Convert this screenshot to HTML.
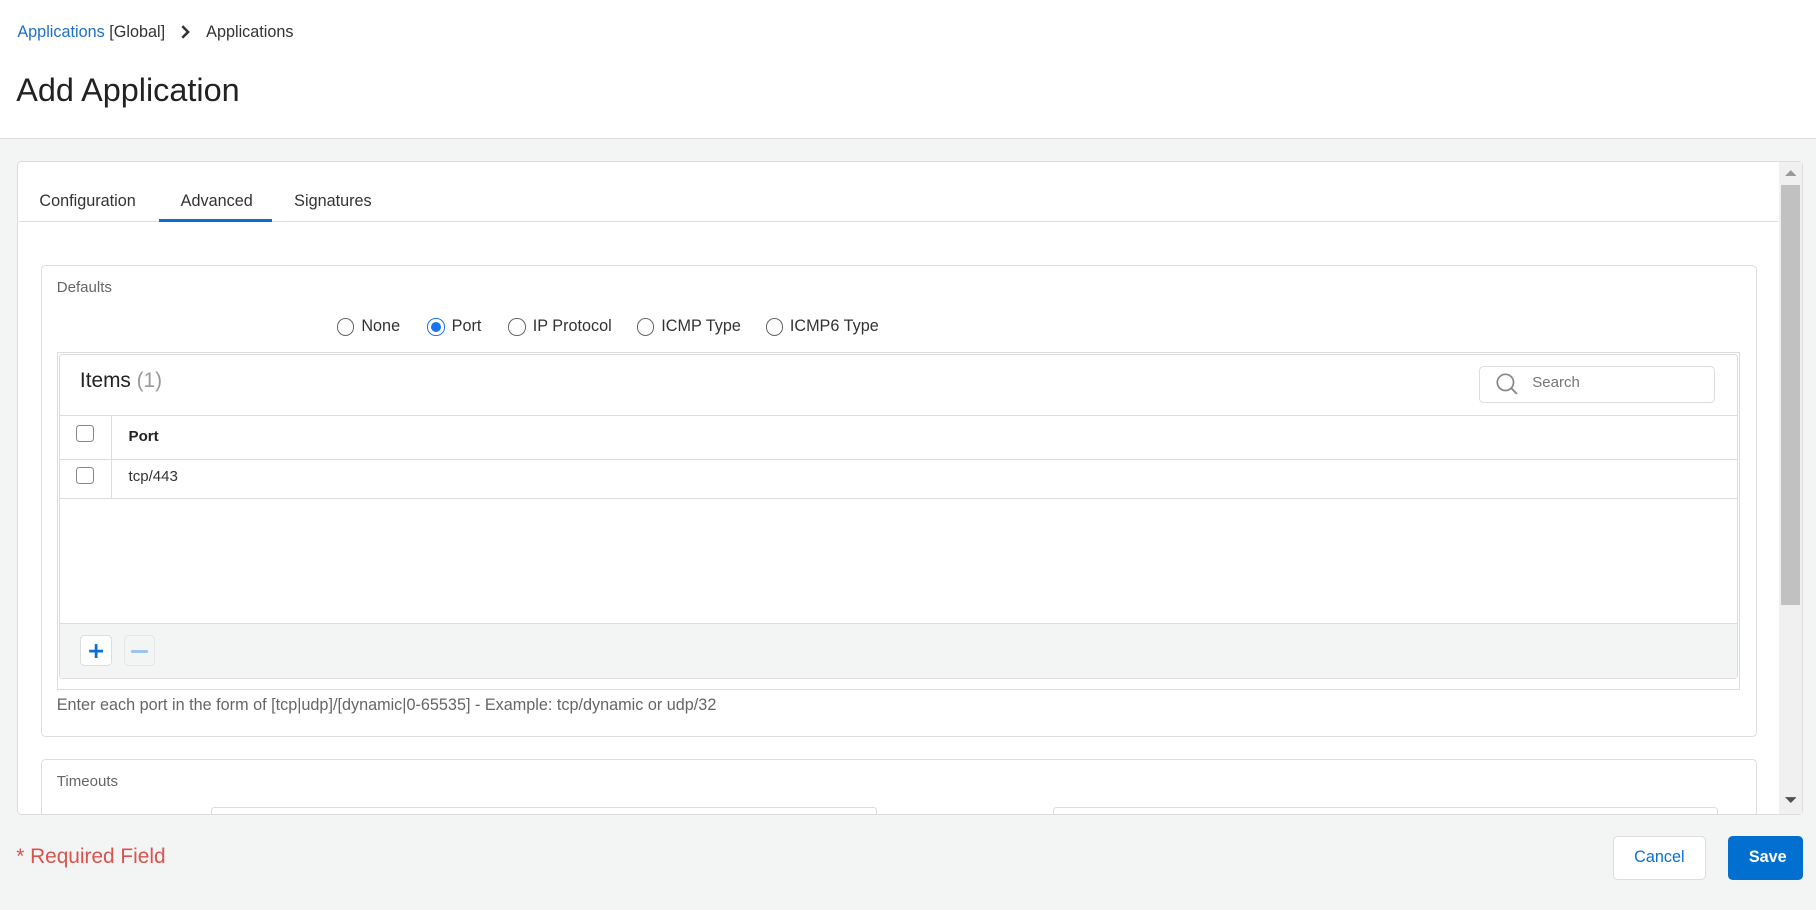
<!DOCTYPE html>
<html><head><meta charset="utf-8"><style>
*{box-sizing:border-box;margin:0;padding:0}
html,body{width:1816px;height:910px;overflow:hidden;background:#f3f4f4}
#w{width:1568px;height:786px;zoom:1.158163;position:relative;font-family:"Liberation Sans",sans-serif;color:#333;background:#f3f4f4}
.a{position:absolute}
.t{position:absolute;white-space:nowrap;line-height:1}
.radio{position:absolute;width:15px;height:15px;border:1px solid #666;border-radius:50%;background:#fff}
.cb{position:absolute;width:15px;height:15px;border:1px solid #888;border-radius:3px;background:#fff}
</style></head><body><div id="w">
<div class="a" style="left:0;top:0;width:1568px;height:120px;background:#fff;border-bottom:1px solid #ddd"></div>
<div class="t" style="left:15px;top:21px;font-size:14px;color:#333"><span style="color:#1f6fc5">Applications</span> [Global]</div>
<svg class="a" style="left:155px;top:22px" width="10" height="12"><path d="M2 1l5 5-5 5" stroke="#333" stroke-width="2.2" fill="none"/></svg>
<div class="t" style="left:178px;top:21px;font-size:14px">Applications</div>
<div class="t" style="left:14px;top:64px;font-size:28px;color:#222">Add Application</div>

<div class="a" style="left:15px;top:139px;width:1542px;height:565px;background:#fff;border:1px solid #ddd;border-radius:4px"></div>
<div class="a" style="left:1536px;top:140px;width:20px;height:563px;background:#f0f0f0"></div>
<div class="a" style="left:1538px;top:160px;width:16px;height:362px;background:#c1c1c1"></div>
<svg class="a" style="left:1541px;top:146px" width="10" height="8"><path d="M0 6h10L5 1z" fill="#999"/></svg>
<svg class="a" style="left:1541px;top:687px" width="10" height="8"><path d="M0 1h10L5 6z" fill="#505050"/></svg>

<div class="a" style="left:16px;top:191px;width:1519px;height:1px;background:#ddd"></div>
<div class="t" style="left:34px;top:167px;font-size:14px">Configuration</div>
<div class="t" style="left:156px;top:167px;font-size:14px">Advanced</div>
<div class="a" style="left:137px;top:189px;width:98px;height:3px;background:#0b6fd0"></div>
<div class="t" style="left:254px;top:167px;font-size:14px">Signatures</div>

<div class="a" style="left:35px;top:229px;width:1482px;height:407px;border:1px solid #ddd;border-radius:4px;background:#fff"></div>
<div class="t" style="left:49px;top:242px;font-size:13px;color:#666">Defaults</div>
<div class="radio" style="left:291px;top:275px"></div><div class="t" style="left:312px;top:275px;font-size:14px">None</div>
<div class="radio" style="left:369px;top:275px;border-color:#1a73e8"></div><div class="a" style="left:372px;top:278px;width:9px;height:9px;border-radius:50%;background:#1a73e8"></div><div class="t" style="left:390px;top:275px;font-size:14px">Port</div>
<div class="radio" style="left:439px;top:275px"></div><div class="t" style="left:460px;top:275px;font-size:14px">IP Protocol</div>
<div class="radio" style="left:550px;top:275px"></div><div class="t" style="left:571px;top:275px;font-size:14px">ICMP Type</div>
<div class="radio" style="left:661px;top:275px"></div><div class="t" style="left:682px;top:275px;font-size:14px">ICMP6 Type</div>

<div class="a" style="left:49px;top:304px;width:1453px;height:292px;border:1px solid #ddd"></div>
<div class="a" style="left:51px;top:306px;width:1450px;height:280px;border:1px solid #ddd;border-radius:3px;background:#fff"></div>
<div class="t" style="left:69px;top:320px;font-size:18px;color:#222">Items <span style="color:#999">(1)</span></div>
<div class="a" style="left:1277px;top:316px;width:204px;height:32px;border:1px solid #ddd;border-radius:4px"></div>
<svg class="a" style="left:1291px;top:321px" width="22" height="22"><circle cx="9" cy="9" r="7" stroke="#888" stroke-width="1.5" fill="none"/><path d="M14 14l5 5" stroke="#888" stroke-width="1.6"/></svg>
<div class="t" style="left:1323px;top:324px;font-size:13px;color:#777">Search</div>
<div class="a" style="left:52px;top:358px;width:1448px;height:1px;background:#ddd"></div>
<div class="a" style="left:52px;top:396px;width:1448px;height:1px;background:#ddd"></div>
<div class="a" style="left:52px;top:430px;width:1448px;height:1px;background:#ddd"></div>
<div class="a" style="left:96px;top:359px;width:1px;height:71px;background:#ddd"></div>
<div class="cb" style="left:66px;top:367px"></div>
<div class="t" style="left:111px;top:370px;font-size:13px;font-weight:bold;color:#222">Port</div>
<div class="cb" style="left:66px;top:403px"></div>
<div class="t" style="left:111px;top:405px;font-size:13px">tcp/443</div>
<div class="a" style="left:52px;top:538px;width:1448px;height:47px;background:#f3f4f4;border-top:1px solid #ddd"></div>
<div class="a" style="left:69px;top:548px;width:28px;height:27px;background:#fff;border:1px solid #ddd;border-radius:4px"></div>
<svg class="a" style="left:76px;top:555px" width="14" height="14"><path d="M7 1v12M1 7h12" stroke="#0b6fd0" stroke-width="2.4"/></svg>
<div class="a" style="left:107px;top:548px;width:27px;height:27px;background:#f3f4f4;border:1px solid #e6e6e6;border-radius:4px"></div>
<div class="a" style="left:113px;top:561px;width:15px;height:3px;background:#9cc3ea;border-radius:1px"></div>
<div class="t" style="left:49px;top:602px;font-size:14px;color:#666">Enter each port in the form of [tcp|udp]/[dynamic|0-65535] - Example: tcp/dynamic or udp/32</div>

<div class="a" style="left:35px;top:655px;width:1482px;height:48px;border:1px solid #ddd;border-bottom:none;border-radius:4px 4px 0 0;background:#fff"></div>
<div class="t" style="left:49px;top:668px;font-size:13px;color:#666">Timeouts</div>
<div class="a" style="left:182px;top:697px;width:575px;height:6px;border:1px solid #ddd;border-bottom:none;border-radius:3px 3px 0 0"></div>
<div class="a" style="left:909px;top:697px;width:574px;height:6px;border:1px solid #ddd;border-bottom:none;border-radius:3px 3px 0 0"></div>

<div class="t" style="left:14px;top:731px;font-size:18px;color:#d9534f">* Required Field</div>
<div class="a" style="left:1393px;top:722px;width:80px;height:38px;background:#fff;border:1px solid #ddd;border-radius:4px"></div>
<div class="t" style="left:1411px;top:733px;font-size:14px;color:#0b6fd0">Cancel</div>
<div class="a" style="left:1492px;top:722px;width:65px;height:38px;background:#006fcf;border-radius:4px"></div>
<div class="t" style="left:1510px;top:733px;font-size:14px;color:#fff;font-weight:bold">Save</div>
</div></body></html>
